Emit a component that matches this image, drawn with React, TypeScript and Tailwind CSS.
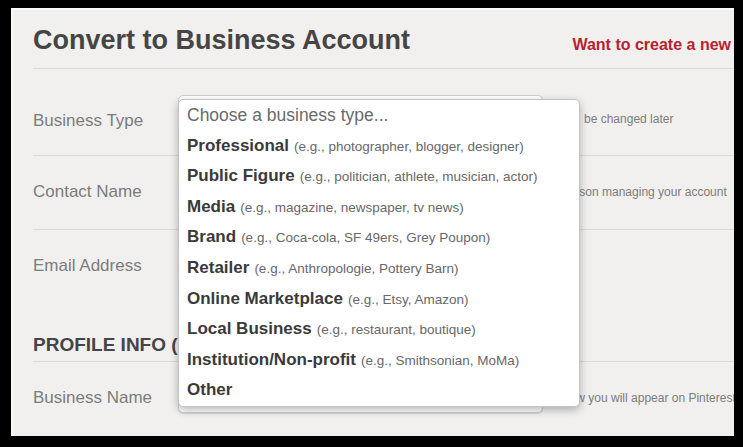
const OPTIONS: { name: string; hint?: string }[] = [
  { name: 'Professional', hint: '(e.g., photographer, blogger, designer)' },
  { name: 'Public Figure', hint: '(e.g., politician, athlete, musician, actor)' },
  { name: 'Media', hint: '(e.g., magazine, newspaper, tv news)' },
  { name: 'Brand', hint: '(e.g., Coca-cola, SF 49ers, Grey Poupon)' },
  { name: 'Retailer', hint: '(e.g., Anthropologie, Pottery Barn)' },
  { name: 'Online Marketplace', hint: '(e.g., Etsy, Amazon)' },
  { name: 'Local Business', hint: '(e.g., restaurant, boutique)' },
  { name: 'Institution/Non-profit', hint: '(e.g., Smithsonian, MoMa)' },
  { name: 'Other' },
]

function Input() {
  return (
    <div className="w-[365px] h-[34px] shrink-0 rounded-[5px] bg-white border border-[#cfcfcf] shadow-[0_1px_1px_rgba(0,0,0,0.12)]" />
  )
}

export default function App() {
  return (
    <div
      className="w-[743px] h-[447px] bg-black pt-[8px] pl-[11px] pr-[9px] pb-[11px]"
      style={{ fontFamily: '"Liberation Sans", Arial, Helvetica, sans-serif' }}
    >
      <div className="relative w-[723px] h-[428px] overflow-hidden bg-[#f1f0ef] shadow-[inset_2px_2px_0_#f9f9f9]">
        <div className="ml-[22px]">
          {/* Header */}
          <div className="flex items-baseline h-[61px] pt-[16px] border-b border-[#dadada]">
            <h1 className="text-[27px] leading-[32px] font-bold text-[#464545]">Convert to Business Account</h1>
            <a className="ml-auto pr-[3px] text-[16px] font-bold text-[#b8222e] whitespace-nowrap relative top-[1px]">
              Want to create a new
            </a>
          </div>

          {/* Business Type */}
          <div className="flex h-[87px] border-b border-[#dadada]">
            <label className="w-[145px] shrink-0 pt-[42px] text-[17px] leading-[20px] text-[#7c7c7c]">Business Type</label>
            <div className="pt-[26px]"><Input /></div>
            <span className="ml-[41px] pt-[43px] text-[12px] leading-[15px] text-[#7c7c7c] whitespace-nowrap">be changed later</span>
          </div>

          {/* Contact Name */}
          <div className="flex h-[74px] border-b border-[#dadada]">
            <label className="w-[145px] shrink-0 pt-[26px] text-[17px] leading-[20px] text-[#7c7c7c]">Contact Name</label>
            <div className="pt-[17px]"><Input /></div>
            <span className="ml-[19px] pt-[29px] text-[12px] leading-[15px] text-[#7c7c7c] whitespace-nowrap">person managing your account</span>
          </div>

          {/* Email Address */}
          <div className="flex h-[73px]">
            <label className="w-[145px] shrink-0 pt-[26px] text-[17px] leading-[20px] text-[#7c7c7c]">Email Address</label>
            <div className="pt-[17px]"><Input /></div>
          </div>

          {/* Profile info */}
          <div className="h-[59px] pt-[31px] border-b border-[#dadada]">
            <h2 className="text-[19px] leading-[22px] font-bold text-[#464545] whitespace-nowrap">PROFILE INFO (</h2>
          </div>

          {/* Business Name */}
          <div className="flex">
            <label className="w-[145px] shrink-0 pt-[26px] text-[17px] leading-[20px] text-[#7c7c7c]">Business Name</label>
            <div className="pt-[17px]"><Input /></div>
            <span className="ml-[20px] pt-[29px] text-[12px] leading-[15px] text-[#7c7c7c] whitespace-nowrap">how you will appear on Pinterest</span>
          </div>
        </div>

        {/* Open select menu */}
        <div className="absolute left-[167px] top-[91px] w-[402px] rounded-[5px] bg-white border border-[#c4c4c4] shadow-[0_3px_8px_rgba(0,0,0,0.28)]">
          <div className="h-[30.6px] pl-[8px] leading-[30.6px] text-[17.5px] text-[#6a6a6a] whitespace-nowrap">
            Choose a business type...
          </div>
          {OPTIONS.map(o => (
            <div key={o.name} className="h-[30.6px] pl-[8px] leading-[30.6px] whitespace-nowrap">
              <span className="text-[17px] font-bold text-[#3a3a3a]">{o.name}</span>
              {o.hint && <span className="ml-[5px] text-[13.5px] leading-none text-[#686868]">{o.hint}</span>}
            </div>
          ))}
        </div>
      </div>
    </div>
  )
}
